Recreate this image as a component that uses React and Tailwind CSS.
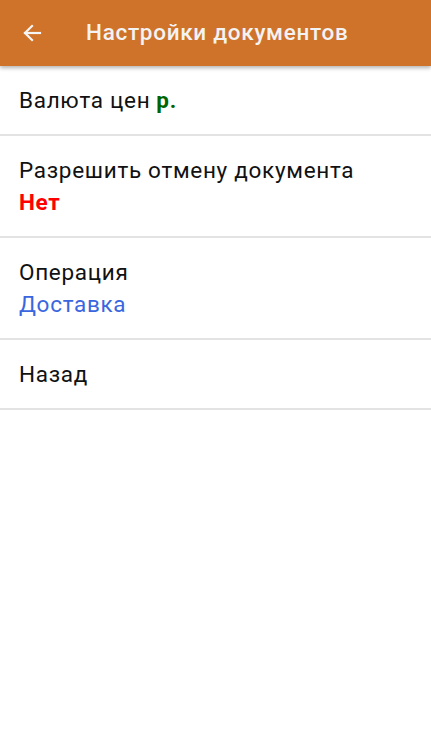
import React from 'react';

const rows = [
  { label: 'Валюта цен', inline: 'р.' },
  { label: 'Разрешить отмену документа', value: 'Нет', valueClass: 'text-[#ff0000] font-bold' },
  { label: 'Операция', value: 'Доставка', valueClass: 'text-[#3a66e0]' },
  { label: 'Назад' },
];

const App = () => {
  return (
    <div className="min-h-screen w-full bg-white" style={{ fontFamily: 'Roboto, "Noto Sans", sans-serif' }}>
      <header className="relative z-10 h-[66px] bg-[#cf722a] flex items-center shadow-[0_2px_4px_rgba(0,0,0,0.3)]">
        <button className="w-[66px] h-full flex items-center justify-center pr-[2px] text-[#f5f5f5]">
          <svg width="24" height="24" viewBox="0 0 24 24" fill="none" stroke="currentColor" strokeWidth="2.2" strokeLinecap="square">
            <path d="M20 12H5" />
            <path d="M12 5l-7 7 7 7" />
          </svg>
        </button>
        <h1 className="ml-[20px] text-[22.5px] font-medium text-[#f3f3f3] tracking-[0.7px]">Настройки документов</h1>
      </header>

      <div>
        {rows.map((r, i) => (
          <div key={i} className="border-b-2 border-[#e3e3e3]">
            <div className={`px-[19px] flex flex-col justify-center ${r.value ? 'h-[100px]' : 'h-[68px]'}`}>
              <div className="text-[22.5px] leading-[32px] tracking-[0.7px] text-[#111]">
                {r.label}
                {r.inline && <span className="ml-[6px] font-bold text-[#006400]">{r.inline}</span>}
              </div>
              {r.value && <div className={`text-[22.5px] leading-[32px] tracking-[0.7px] ${r.valueClass}`}>{r.value}</div>}
            </div>
          </div>
        ))}
      </div>
    </div>
  );
};

export default App;
